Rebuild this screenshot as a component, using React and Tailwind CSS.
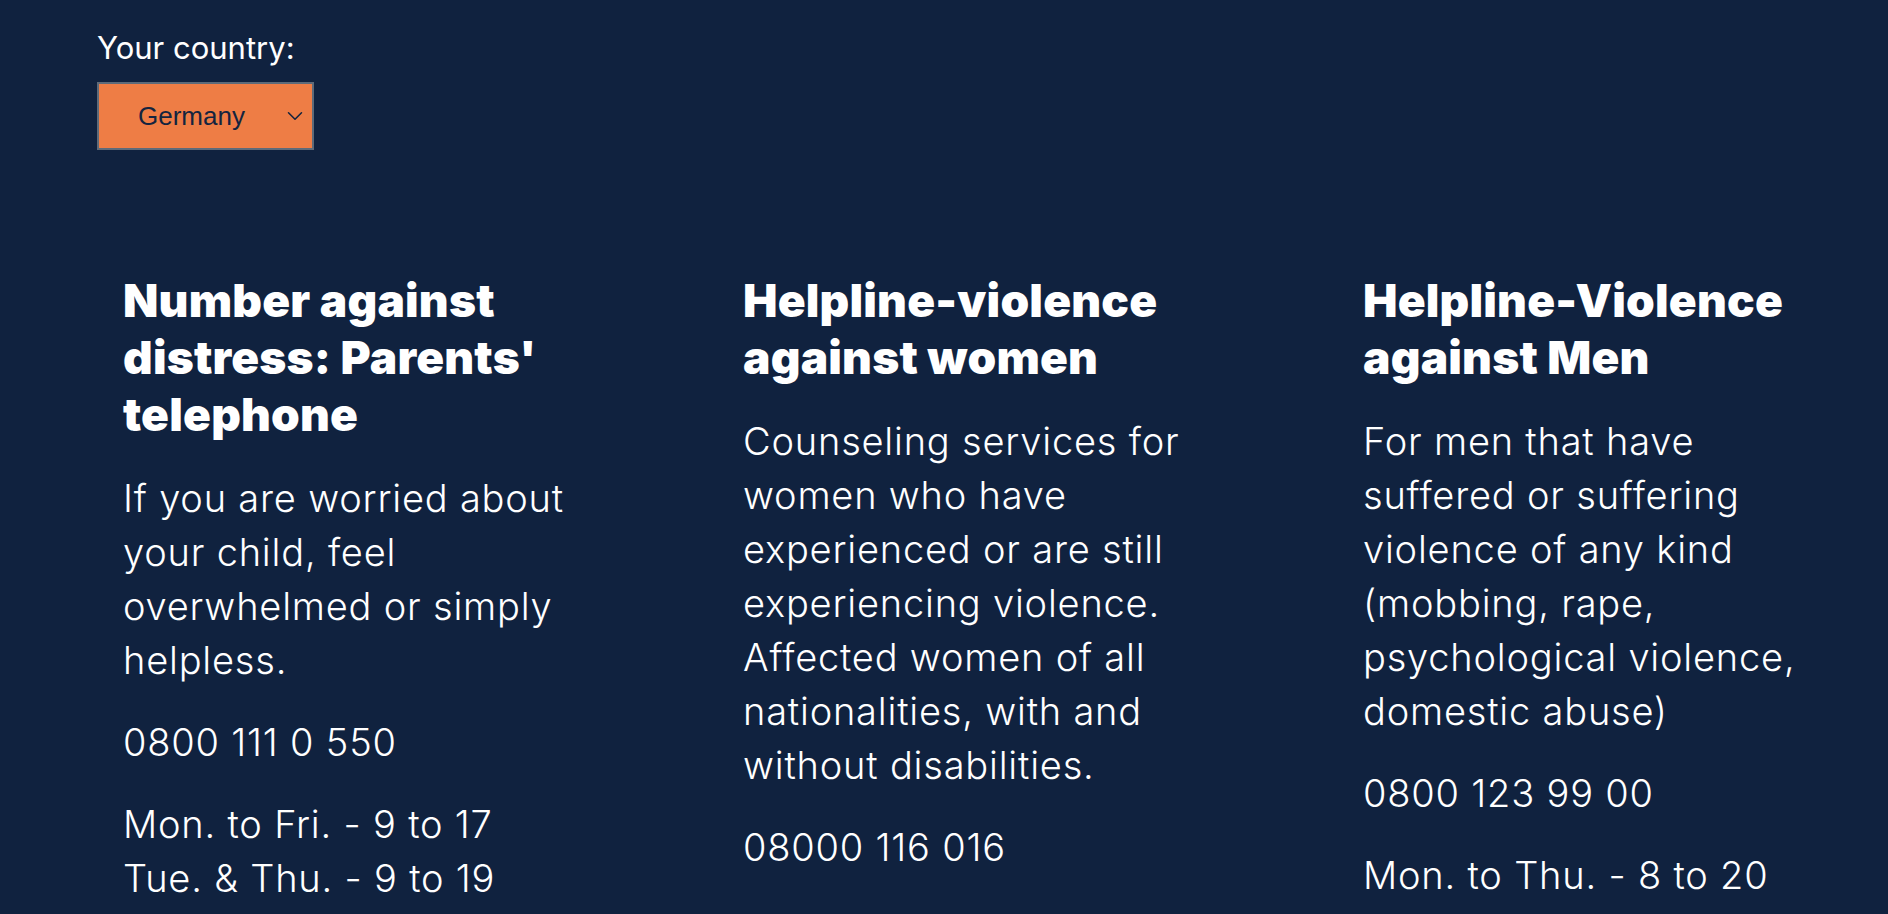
import { ChevronDown } from "lucide-react";

const helplines = [
  {
    title: "Number against distress: Parents' telephone",
    text: "If you are worried about your child, feel overwhelmed or simply helpless.",
    phone: "0800 111 0 550",
    hours: ["Mon. to Fri. - 9 to 17", "Tue. & Thu. - 9 to 19"],
  },
  {
    title: "Helpline-violence against women",
    text: "Counseling services for women who have experienced or are still experiencing violence. Affected women of all nationalities, with and without disabilities.",
    phone: "08000 116 016",
    hours: [],
  },
  {
    title: "Helpline-Violence against Men",
    text: "For men that have suffered or suffering violence of any kind (mobbing, rape, psychological violence, domestic abuse)",
    phone: "0800 123 99 00",
    hours: ["Mon. to Thu. - 8 to 20"],
  },
];

function CountrySelect() {
  return (
    <div className="flex h-[68px] w-[217px] items-center justify-between border-2 border-[#5d6a79] bg-[#ee7d45] pl-[39px] pr-[4px] font-['Liberation_Sans',Arial,sans-serif] text-[26px] text-[#13243f]">
      <span>Germany</span>
      <ChevronDown size={26} strokeWidth={1.4} className="text-[#13243f]" />
    </div>
  );
}

function HelplineCard({ item }) {
  return (
    <div className="w-[480px] text-white">
      <h3 className="text-[46px] font-black leading-[57px] tracking-[0.2px]">
        {item.title}
      </h3>
      <p className="mt-[28px] text-[38px] font-light leading-[54px] tracking-[0.8px]">
        {item.text}
      </p>
      <p className="mt-[28px] text-[38px] font-light leading-[54px] tracking-[0.8px]">
        {item.phone}
      </p>
      {item.hours.length > 0 && (
        <p className="mt-[28px] text-[38px] font-light leading-[54px] tracking-[0.8px]">
          {item.hours.map((h) => (
            <span key={h} className="block">
              {h}
            </span>
          ))}
        </p>
      )}
    </div>
  );
}

export default function App() {
  return (
    <div className="min-h-screen overflow-hidden bg-[#10223f] pl-[97px] pt-[28px] font-['Inter','Noto_Sans',sans-serif]">
      <label className="block text-[31px] leading-[40px] text-white">
        Your country:
      </label>
      <div className="mt-[14px]">
        <CountrySelect />
      </div>

      {/* helpline columns */}
      <div className="ml-[26px] mt-[122px] grid grid-cols-[500px_500px_500px] gap-x-[120px]">
        {helplines.map((item) => (
          <HelplineCard key={item.title} item={item} />
        ))}
      </div>
    </div>
  );
}
